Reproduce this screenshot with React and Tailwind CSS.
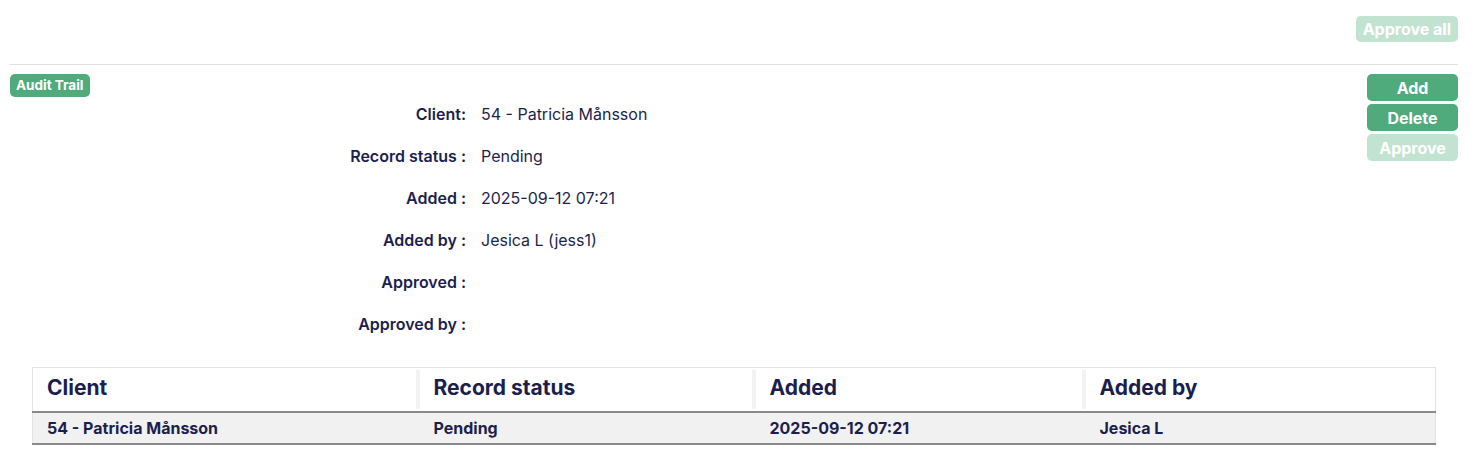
import React from "react";

const details = [
  { label: "Client:", value: "54 - Patricia Månsson" },
  { label: "Record status :", value: "Pending" },
  { label: "Added :", value: "2025-09-12 07:21" },
  { label: "Added by :", value: "Jesica L (jess1)" },
  { label: "Approved :", value: "" },
  { label: "Approved by :", value: "" },
];

const columns = [
  { label: "Client", width: "w-[387px]" },
  { label: "Record status", width: "w-[336px]" },
  { label: "Added", width: "w-[330px]" },
  { label: "Added by", width: "" },
];

const row = ["54 - Patricia Månsson", "Pending", "2025-09-12 07:21", "Jesica L"];

const App = () => {
  return (
    <div className="min-h-[459px] bg-white font-['Inter',sans-serif] text-[#1c1f4d] pl-[10px] pr-[19px]">
      <div className="flex justify-end pt-[16px] pb-[22px] border-b border-[#e0e0e0]">
        <button className="h-[26px] px-[7px] rounded-[5px] bg-[#c3e3d2] text-white text-[16px] font-bold leading-none">
          Approve all
        </button>
      </div>

      <div className="flex pt-[9px]">
        <div className="flex-1">
          <div className="flex w-fit items-center h-[23px] px-[6px] rounded-[5px] bg-[#4fab7c] text-white text-[13.5px] font-bold leading-none">
            Audit Trail
          </div>
          <div className="grid grid-cols-[456px_1fr] gap-x-[15px] gap-y-[8px]">
            {details.map((d) => (
              <React.Fragment key={d.label}>
                <div className="h-[34px] flex items-center justify-end text-[16px] font-semibold">
                  {d.label}
                </div>
                <div className="h-[34px] flex items-center text-[16px]">{d.value}</div>
              </React.Fragment>
            ))}
          </div>
        </div>
        <div className="w-[91px] flex flex-col gap-[3px]">
          <button className="h-[27px] rounded-[5px] bg-[#4fab7c] text-white text-[16px] font-bold leading-none">
            Add
          </button>
          <button className="h-[27px] rounded-[5px] bg-[#4fab7c] text-white text-[16px] font-bold leading-none">
            Delete
          </button>
          <button className="h-[27px] rounded-[5px] bg-[#c3e3d2] text-white text-[16px] font-bold leading-none">
            Approve
          </button>
        </div>
      </div>

      <div className="mx-[22px] mt-[26px]">
        <table className="w-full border-collapse border border-[#e3e3e3]">
          <thead>
            <tr className="bg-white border-b-2 border-[#8a8a8a]">
              {columns.map((c, i) => (
                <th key={c.label} className={`${c.width} p-0 text-left font-bold`}>
                  <div className="flex h-[43px]">
                    <div className="flex-1 flex items-center pl-[14px] pb-[3px] text-[21px]">{c.label}</div>
                    {i < columns.length - 1 && (
                      <div className="w-[4px] my-[2px] bg-[#f3f3f3]"></div>
                    )}
                  </div>
                </th>
              ))}
            </tr>
          </thead>
          <tbody>
            <tr className="bg-[#f1f1f1] border-b-2 border-[#8a8a8a]">
              {row.map((v, i) => (
                <td key={i} className="h-[32px] pl-[14px] text-[16px] font-bold">
                  {v}
                </td>
              ))}
            </tr>
          </tbody>
        </table>
      </div>
    </div>
  );
};

export default App;
